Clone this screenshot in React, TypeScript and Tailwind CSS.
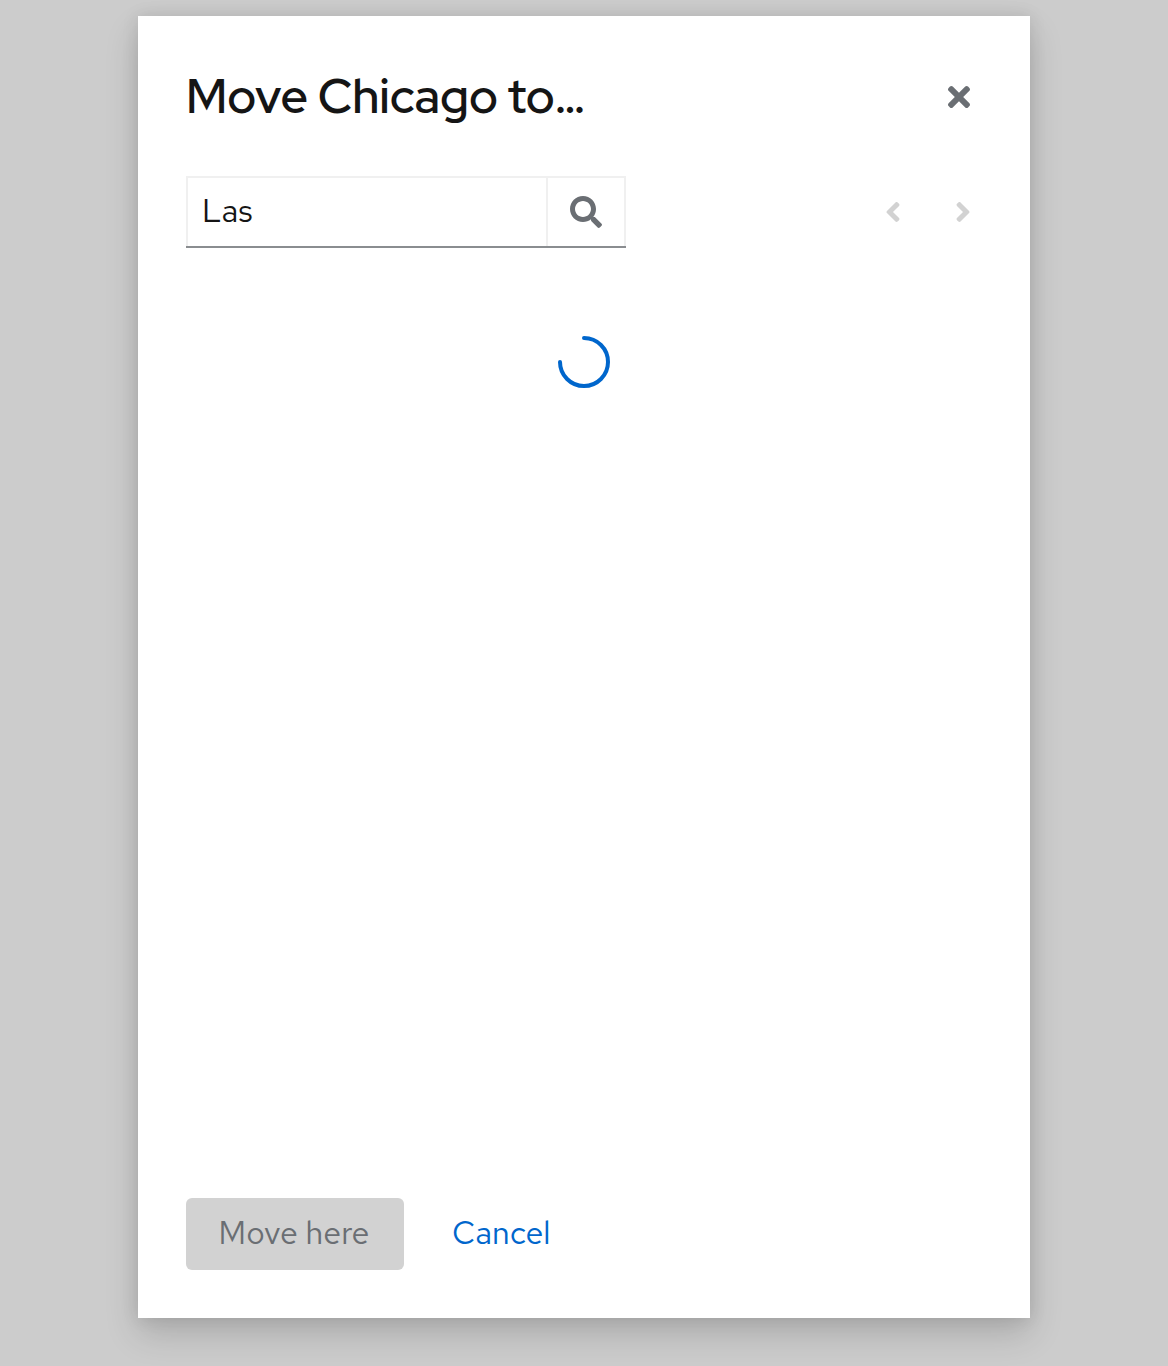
import { FaTimes, FaSearch, FaAngleLeft, FaAngleRight } from 'react-icons/fa';

export default function App() {
  return (
    <div className="h-[1366px] w-full overflow-hidden bg-[#cccccc] pt-4 font-['Red_Hat_Text','Lato',sans-serif]">
      <section className="mx-auto flex h-[1302px] w-[892px] flex-col bg-white p-12 shadow-[0_16px_32px_0_rgba(3,3,3,0.16),0_0_16px_0_rgba(3,3,3,0.1)]">
        <header className="flex h-[66px] items-center justify-between">
          <h1 className="-mt-0.5 font-['Red_Hat_Display','Red_Hat_Text','Lato',sans-serif] text-[48px] font-[560] leading-[62px] tracking-[-0.12px] text-[#151515]">Move Chicago to<span className="tracking-[-2.5px]">...</span></h1>
          <button className="mr-[7px]" aria-label="Close"><FaTimes className="size-8 text-[#6a6e73]" /></button>
        </header>
        <div className="mt-[46px] flex h-[72px] items-center justify-between">
          <div className="flex h-[72px] w-[440px] flex-col">
            <div className="flex h-[70px] border-2 border-b-0 border-[#f0f0f0]">
              <span className="flex w-[358px] items-center pb-0.5 pl-3.5 text-[32px] leading-none text-[#151515]">Las</span>
              <button className="flex flex-1 items-center justify-center border-l-2 border-[#f0f0f0]" aria-label="Search"><FaSearch className="size-8 text-[#6a6e73]" /></button>
            </div>
            <div className="h-0.5 bg-[#8a8d90]" />
          </div>
          <nav className="mr-[3px] flex gap-[38px] text-[#d2d2d2]">
            <FaAngleLeft className="size-8" /><FaAngleRight className="size-8" />
          </nav>
        </div>
        <div className="mt-[88px] flex flex-1 justify-center">
          <svg width="52" height="52" viewBox="0 0 52 52" fill="none"><path d="M26 2A24 24 0 1 1 2 26" stroke="#0066cc" strokeWidth="4" strokeLinecap="round" /></svg>
        </div>
        <footer className="flex h-[72px] items-center gap-12 text-[32px]">
          <button className="h-[72px] w-[218px] rounded-md bg-[#d2d2d2] pb-0.5 pr-[2px] tracking-[0.1px] text-[#6a6e73]">Move here</button>
          <button className="pb-0.5 text-[#0066cc]">Cancel</button>
        </footer>
      </section>
    </div>
  );
}
